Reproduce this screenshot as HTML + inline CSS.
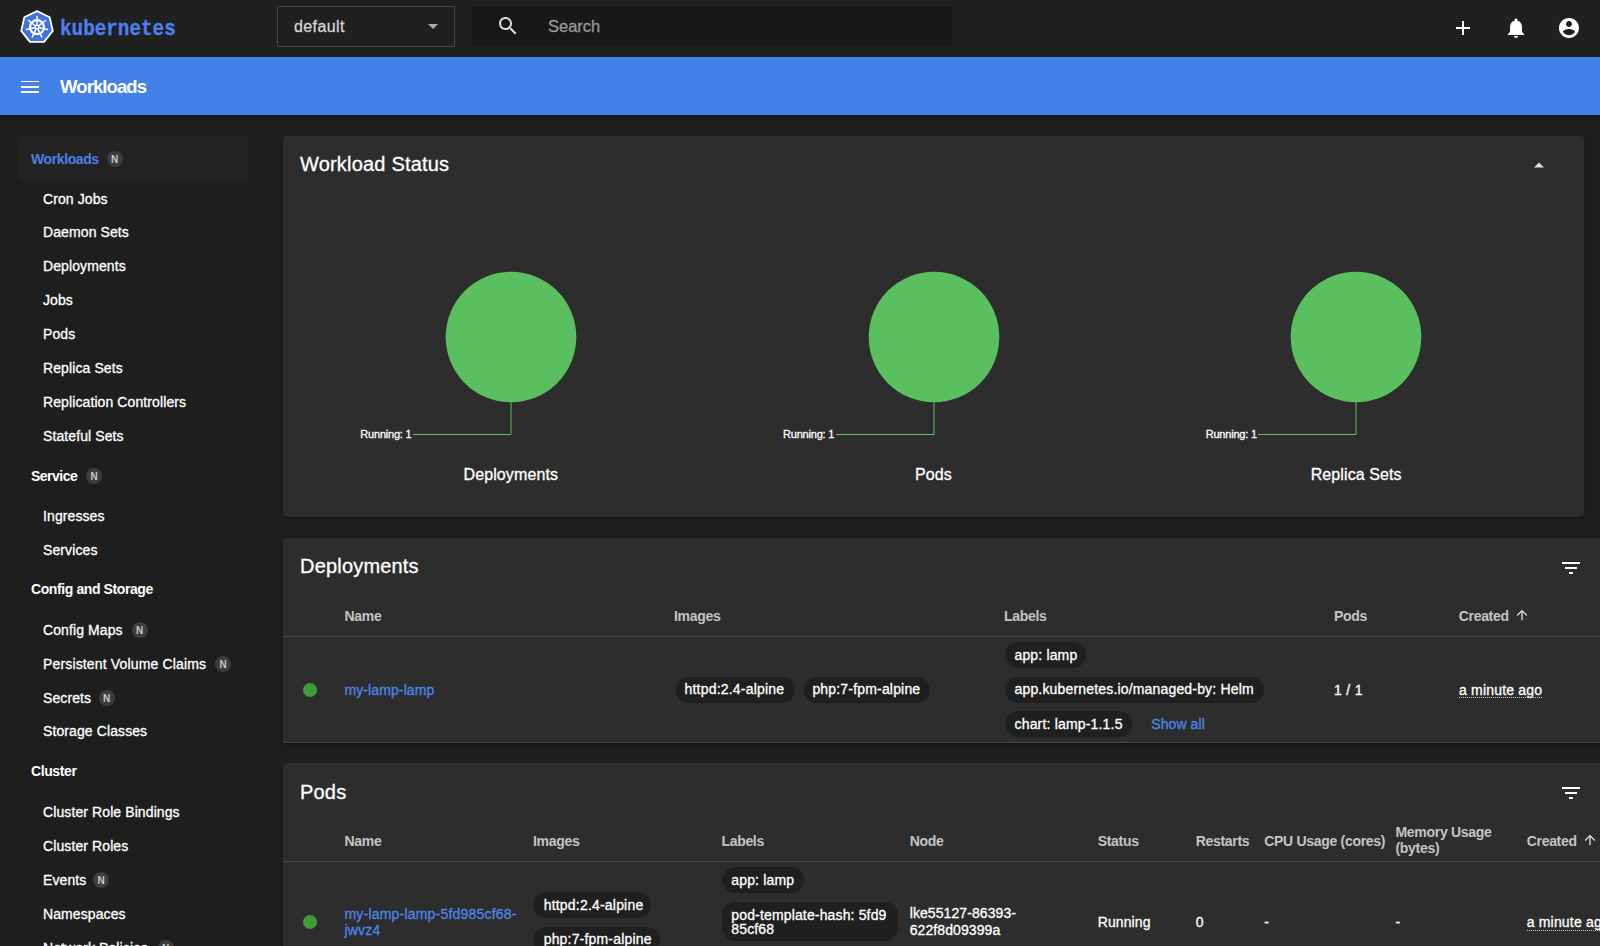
<!DOCTYPE html>
<html><head><meta charset="utf-8"><title>Workloads - Kubernetes Dashboard</title>
<style>
html,body{margin:0;padding:0;width:1600px;height:946px;overflow:hidden;background:#1e1e1e;font-family:'Liberation Sans', sans-serif;}
.t{position:absolute;white-space:nowrap;line-height:1;-webkit-text-stroke:0.3px currentColor;}
.b{-webkit-text-stroke:0;}
svg{display:block}
</style></head><body>
<div style="position:absolute;left:0;top:0;width:1600px;height:57px;background:#202020"></div>
<svg style="position:absolute;left:20px;top:10px;" width="34" height="34" viewBox="0 0 34 34"><polygon points="17.00,1.10 29.67,7.20 32.79,20.90 24.03,31.90 9.97,31.90 1.21,20.90 4.33,7.20" fill="#4470e6" stroke="#fff" stroke-width="1.8" stroke-linejoin="round"/><circle cx="17" cy="17.2" r="7" fill="none" stroke="#fff" stroke-width="2.2"/><line x1="17" y1="17.2" x2="17.00" y2="6.40" stroke="#fff" stroke-width="1.5" stroke-linecap="round"/><line x1="17" y1="17.2" x2="25.44" y2="10.47" stroke="#fff" stroke-width="1.5" stroke-linecap="round"/><line x1="17" y1="17.2" x2="27.53" y2="19.60" stroke="#fff" stroke-width="1.5" stroke-linecap="round"/><line x1="17" y1="17.2" x2="21.69" y2="26.93" stroke="#fff" stroke-width="1.5" stroke-linecap="round"/><line x1="17" y1="17.2" x2="12.31" y2="26.93" stroke="#fff" stroke-width="1.5" stroke-linecap="round"/><line x1="17" y1="17.2" x2="6.47" y2="19.60" stroke="#fff" stroke-width="1.5" stroke-linecap="round"/><line x1="17" y1="17.2" x2="8.56" y2="10.47" stroke="#fff" stroke-width="1.5" stroke-linecap="round"/><circle cx="17" cy="17.2" r="2.4" fill="#fff"/><circle cx="17" cy="17.2" r="1.1" fill="#4a6ad8"/></svg>
<div class="t" style="left:60px;top:19px;font-family:'Liberation Mono',monospace;font-size:19.3px;font-weight:bold;color:#4e7ff0;transform:scaleY(1.12);transform-origin:0 0;line-height:1">kubernetes</div>
<div style="position:absolute;left:277px;top:6px;width:176px;height:39px;border:1px solid #454545;border-radius:1px"></div>
<div class="t" style="left:294px;top:19.46px;font-size:16px;font-weight:normal;color:#d6d6d6;letter-spacing:0.4px;">default</div>
<svg style="position:absolute;left:420.5px;top:14.4px;" width="24" height="24" viewBox="0 0 24 24"><path d="M7 10l5 5 5-5z" fill="#aaa"/></svg>
<div style="position:absolute;left:472px;top:7px;width:480px;height:39px;background:#181818"></div>
<svg style="position:absolute;left:496px;top:14px;" width="24" height="24" viewBox="0 0 24 24"><path d="M15.5 14h-.79l-.28-.27C15.41 12.59 16 11.11 16 9.5 16 5.91 13.09 3 9.5 3S3 5.91 3 9.5 5.91 16 9.5 16c1.61 0 3.09-.59 4.23-1.57l.27.28v.79l5 4.99L20.49 19l-4.99-5zm-6 0C7.01 14 5 11.99 5 9.5S7.01 5 9.5 5 14 7.01 14 9.5 11.99 14 9.5 14z" fill="#ddd"/></svg>
<div class="t" style="left:548px;top:18.03px;font-size:16.5px;font-weight:normal;color:#999;letter-spacing:0px;">Search</div>
<svg style="position:absolute;left:1450.5px;top:15.5px;" width="24" height="24" viewBox="0 0 24 24"><path d="M19 13h-6v6h-2v-6H5v-2h6V5h2v6h6v2z" fill="#fff"/></svg>
<svg style="position:absolute;left:1503.5px;top:15.5px;" width="24" height="24" viewBox="0 0 24 24"><path d="M12 22c1.1 0 2-.9 2-2h-4c0 1.1.89 2 2 2zm6-6v-5c0-3.07-1.64-5.64-4.5-6.32V4c0-.83-.67-1.5-1.5-1.5s-1.5.67-1.5 1.5v.68C7.63 5.36 6 7.920 6 11v5l-2 2v1h16v-1l-2-2z" fill="#fff"/></svg>
<svg style="position:absolute;left:1557.2px;top:15.5px;" width="24" height="24" viewBox="0 0 24 24"><path d="M12 2C6.48 2 2 6.48 2 12s4.48 10 10 10 10-4.48 10-10S17.52 2 12 2zm0 3c1.66 0 3 1.34 3 3s-1.34 3-3 3-3-1.34-3-3 1.34-3 3-3zm0 14.2c-2.5 0-4.71-1.28-6-3.22.03-1.99 4-3.08 6-3.08 1.99 0 5.97 1.09 6 3.08-1.29 1.94-3.5 3.22-6 3.22z" fill="#fff"/></svg>
<div style="position:absolute;left:0;top:57px;width:1600px;height:58px;background:#4380e8;box-shadow:0 2px 3px rgba(0,0,0,.35)"></div>
<svg style="position:absolute;left:18px;top:75px;" width="24" height="24" viewBox="0 0 24 24"><path d="M3 18h18v-2H3v2zm0-5h18v-2H3v2zm0-8v2h18V6H3z" fill="#fff"/></svg>
<div class="t b" style="left:60px;top:77.84px;font-size:18.5px;font-weight:bold;color:#fff;letter-spacing:-0.9px;">Workloads</div>
<div style="position:absolute;left:19px;top:137px;width:229px;height:44px;background:#232323"></div>
<div class="t b" style="left:31px;top:151.65px;font-size:14px;font-weight:bold;color:#4a80e8;letter-spacing:-0.4px;">Workloads</div>
<div style="position:absolute;left:106.5px;top:151px;width:16px;height:16px;border-radius:50%;background:#3d3d3d;color:#c8c8c8;font:bold 10px/17px 'Liberation Sans', sans-serif;text-align:center">N</div>
<div class="t" style="left:43px;top:191.55px;font-size:14px;font-weight:normal;color:#fff;letter-spacing:0.1px;">Cron Jobs</div>
<div class="t" style="left:43px;top:225.45px;font-size:14px;font-weight:normal;color:#fff;letter-spacing:0.1px;">Daemon Sets</div>
<div class="t" style="left:43px;top:259.35px;font-size:14px;font-weight:normal;color:#fff;letter-spacing:0.1px;">Deployments</div>
<div class="t" style="left:43px;top:293.25px;font-size:14px;font-weight:normal;color:#fff;letter-spacing:0.1px;">Jobs</div>
<div class="t" style="left:43px;top:327.15px;font-size:14px;font-weight:normal;color:#fff;letter-spacing:0.1px;">Pods</div>
<div class="t" style="left:43px;top:361.05px;font-size:14px;font-weight:normal;color:#fff;letter-spacing:0.1px;">Replica Sets</div>
<div class="t" style="left:43px;top:394.95px;font-size:14px;font-weight:normal;color:#fff;letter-spacing:0.1px;">Replication Controllers</div>
<div class="t" style="left:43px;top:428.85px;font-size:14px;font-weight:normal;color:#fff;letter-spacing:0.1px;">Stateful Sets</div>
<div class="t b" style="left:31px;top:468.65px;font-size:14px;font-weight:bold;color:#fff;letter-spacing:-0.5px;">Service</div>
<div style="position:absolute;left:86px;top:468px;width:16px;height:16px;border-radius:50%;background:#3d3d3d;color:#c8c8c8;font:bold 10px/17px 'Liberation Sans', sans-serif;text-align:center">N</div>
<div class="t" style="left:43px;top:508.85px;font-size:14px;font-weight:normal;color:#fff;letter-spacing:0.1px;">Ingresses</div>
<div class="t" style="left:43px;top:542.65px;font-size:14px;font-weight:normal;color:#fff;letter-spacing:0.1px;">Services</div>
<div class="t b" style="left:31px;top:582.45px;font-size:14px;font-weight:bold;color:#fff;letter-spacing:-0.4px;">Config and Storage</div>
<div class="t" style="left:43px;top:622.85px;font-size:14px;font-weight:normal;color:#fff;letter-spacing:0.1px;">Config Maps</div>
<div style="position:absolute;left:131.7px;top:622px;width:16px;height:16px;border-radius:50%;background:#3d3d3d;color:#c8c8c8;font:bold 10px/17px 'Liberation Sans', sans-serif;text-align:center">N</div>
<div class="t" style="left:43px;top:656.75px;font-size:14px;font-weight:normal;color:#fff;letter-spacing:0.15px;">Persistent Volume Claims</div>
<div style="position:absolute;left:215px;top:656px;width:16px;height:16px;border-radius:50%;background:#3d3d3d;color:#c8c8c8;font:bold 10px/17px 'Liberation Sans', sans-serif;text-align:center">N</div>
<div class="t" style="left:43px;top:690.55px;font-size:14px;font-weight:normal;color:#fff;letter-spacing:0.1px;">Secrets</div>
<div style="position:absolute;left:98.5px;top:690px;width:16px;height:16px;border-radius:50%;background:#3d3d3d;color:#c8c8c8;font:bold 10px/17px 'Liberation Sans', sans-serif;text-align:center">N</div>
<div class="t" style="left:43px;top:724.45px;font-size:14px;font-weight:normal;color:#fff;letter-spacing:0.1px;">Storage Classes</div>
<div class="t b" style="left:31px;top:764.45px;font-size:14px;font-weight:bold;color:#fff;letter-spacing:-0.4px;">Cluster</div>
<div class="t" style="left:43px;top:804.55px;font-size:14px;font-weight:normal;color:#fff;letter-spacing:0.1px;">Cluster Role Bindings</div>
<div class="t" style="left:43px;top:838.55px;font-size:14px;font-weight:normal;color:#fff;letter-spacing:0.1px;">Cluster Roles</div>
<div class="t" style="left:43px;top:872.55px;font-size:14px;font-weight:normal;color:#fff;letter-spacing:0.1px;">Events</div>
<div style="position:absolute;left:93px;top:872px;width:16px;height:16px;border-radius:50%;background:#3d3d3d;color:#c8c8c8;font:bold 10px/17px 'Liberation Sans', sans-serif;text-align:center">N</div>
<div class="t" style="left:43px;top:906.65px;font-size:14px;font-weight:normal;color:#fff;letter-spacing:0.1px;">Namespaces</div>
<div class="t" style="left:43px;top:940.55px;font-size:14px;font-weight:normal;color:#fff;letter-spacing:0.1px;">Network Policies</div>
<div style="position:absolute;left:157.6px;top:940px;width:16px;height:16px;border-radius:50%;background:#3d3d3d;color:#c8c8c8;font:bold 10px/17px 'Liberation Sans', sans-serif;text-align:center">N</div>
<div style="position:absolute;left:283px;top:136px;width:1301px;height:381px;background:#2d2d2d;border-radius:4px;box-shadow:0 2px 1px -1px rgba(0,0,0,.2),0 1px 1px 0 rgba(0,0,0,.14),0 1px 3px 0 rgba(0,0,0,.12)"></div>
<div class="t" style="left:300px;top:153.67px;font-size:20px;font-weight:normal;color:#fff;letter-spacing:0.19px;">Workload Status</div>
<svg style="position:absolute;left:1526.5px;top:152.5px;" width="24" height="24" viewBox="0 0 24 24"><path d="M7 14.5l5-5 5 5z" fill="#ddd"/></svg>
<svg style="position:absolute;left:440.8px;top:267px;overflow:visible" width="140" height="175" viewBox="0 0 140 175"><circle cx="70" cy="70" r="65.3" fill="#5abf5e"/><polyline points="70,135 70,167.5 -28,167.5" fill="none" stroke="#5abf5e" stroke-width="1"/></svg>
<div class="t" style="left:360.3px;top:429.49px;font-size:11px;font-weight:normal;color:#fff;letter-spacing:-0.2px;">Running: 1</div>
<div class="t" style="left:410.8px;width:200px;text-align:center;top:467.46px;font-size:16px;color:#fff;letter-spacing:0.1px">Deployments</div>
<svg style="position:absolute;left:863.5px;top:267px;overflow:visible" width="140" height="175" viewBox="0 0 140 175"><circle cx="70" cy="70" r="65.3" fill="#5abf5e"/><polyline points="70,135 70,167.5 -28,167.5" fill="none" stroke="#5abf5e" stroke-width="1"/></svg>
<div class="t" style="left:783.0px;top:429.49px;font-size:11px;font-weight:normal;color:#fff;letter-spacing:-0.2px;">Running: 1</div>
<div class="t" style="left:833.5px;width:200px;text-align:center;top:467.46px;font-size:16px;color:#fff;letter-spacing:0.1px">Pods</div>
<svg style="position:absolute;left:1286.2px;top:267px;overflow:visible" width="140" height="175" viewBox="0 0 140 175"><circle cx="70" cy="70" r="65.3" fill="#5abf5e"/><polyline points="70,135 70,167.5 -28,167.5" fill="none" stroke="#5abf5e" stroke-width="1"/></svg>
<div class="t" style="left:1205.7px;top:429.49px;font-size:11px;font-weight:normal;color:#fff;letter-spacing:-0.2px;">Running: 1</div>
<div class="t" style="left:1256.2px;width:200px;text-align:center;top:467.46px;font-size:16px;color:#fff;letter-spacing:0.1px">Replica Sets</div>
<div style="position:absolute;left:283px;top:538px;width:1330px;height:205px;background:#2d2d2d;border-radius:4px;box-shadow:0 2px 1px -1px rgba(0,0,0,.2),0 1px 1px 0 rgba(0,0,0,.14),0 1px 3px 0 rgba(0,0,0,.12);border-radius:4px 4px 0 0"></div>
<div style="position:absolute;left:283px;top:742px;width:1317px;height:1px;background:#464646"></div>
<div class="t" style="left:300px;top:556.47px;font-size:20px;font-weight:normal;color:#fff;letter-spacing:0.19px;">Deployments</div>
<svg style="position:absolute;left:1559px;top:555.5px;" width="24" height="24" viewBox="0 0 24 24"><path d="M10 18h4v-2h-4v2zM3 6v2h18V6H3zm3 7h12v-2H6v2z" fill="#fff"/></svg>
<div class="t b" style="left:344.5px;top:608.75px;font-size:14px;font-weight:bold;color:#c4c4c4;letter-spacing:-0.3px;">Name</div>
<div class="t b" style="left:674px;top:608.75px;font-size:14px;font-weight:bold;color:#c4c4c4;letter-spacing:-0.3px;">Images</div>
<div class="t b" style="left:1004px;top:608.75px;font-size:14px;font-weight:bold;color:#c4c4c4;letter-spacing:-0.3px;">Labels</div>
<div class="t b" style="left:1334px;top:608.75px;font-size:14px;font-weight:bold;color:#c4c4c4;letter-spacing:-0.3px;">Pods</div>
<div class="t b" style="left:1458.7px;top:608.75px;font-size:14px;font-weight:bold;color:#c4c4c4;letter-spacing:-0.3px;">Created</div>
<svg style="position:absolute;left:1513.8px;top:607.3px;" width="16" height="16" viewBox="0 0 24 24"><path d="M4 12l1.41 1.41L11 7.83V20h2V7.83l5.58 5.59L20 12l-8-8-8 8z" fill="#ddd"/></svg>
<div style="position:absolute;left:283px;top:636px;width:1317px;height:1px;background:#484848"></div>
<div style="position:absolute;left:303px;top:683px;width:14px;height:14px;border-radius:50%;background:#3f9b35"></div>
<div class="t" style="left:344.5px;top:682.85px;font-size:14px;font-weight:normal;color:#4f86e8;letter-spacing:0.1px;">my-lamp-lamp</div>
<div style="position:absolute;left:675.5px;top:676.5px;width:119px;height:26px;border-radius:13px;background:#1f1f1f"></div>
<div class="t" style="left:684.5px;top:682.35px;font-size:14px;font-weight:normal;color:#fff;letter-spacing:0.2px;">httpd:2.4-alpine</div>
<div style="position:absolute;left:803.5px;top:676.5px;width:126px;height:26px;border-radius:13px;background:#1f1f1f"></div>
<div class="t" style="left:812.4px;top:682.35px;font-size:14px;font-weight:normal;color:#fff;letter-spacing:0.18px;">php:7-fpm-alpine</div>
<div style="position:absolute;left:1005px;top:642px;width:81px;height:26px;border-radius:13px;background:#1f1f1f"></div>
<div class="t" style="left:1014.5px;top:647.75px;font-size:14px;font-weight:normal;color:#fff;letter-spacing:0.15px;">app: lamp</div>
<div style="position:absolute;left:1005px;top:676.5px;width:259px;height:26px;border-radius:13px;background:#1f1f1f"></div>
<div class="t" style="left:1014.5px;top:682.35px;font-size:14px;font-weight:normal;color:#fff;letter-spacing:0.17px;">app.kubernetes.io/managed-by: Helm</div>
<div style="position:absolute;left:1005px;top:711px;width:127px;height:26px;border-radius:13px;background:#1f1f1f"></div>
<div class="t" style="left:1014.5px;top:716.85px;font-size:14px;font-weight:normal;color:#fff;letter-spacing:0.18px;">chart: lamp-1.1.5</div>
<div class="t" style="left:1151.3px;top:716.65px;font-size:14px;font-weight:normal;color:#4f86e8;letter-spacing:0.08px;">Show all</div>
<div class="t" style="left:1334px;top:682.65px;font-size:14px;font-weight:normal;color:#fff;letter-spacing:0.3px;">1 / 1</div>
<div class="t" style="left:1459px;top:682.65px;font-size:14px;font-weight:normal;color:#fff;letter-spacing:0.19px;">a minute ago</div>
<div style="position:absolute;left:1459px;top:697px;width:83px;height:0;border-top:1px dotted #ccc"></div>
<div style="position:absolute;left:283px;top:763px;width:1330px;height:300px;background:#2d2d2d;border-radius:4px;box-shadow:0 2px 1px -1px rgba(0,0,0,.2),0 1px 1px 0 rgba(0,0,0,.14),0 1px 3px 0 rgba(0,0,0,.12)"></div>
<div class="t" style="left:300px;top:781.87px;font-size:20px;font-weight:normal;color:#fff;letter-spacing:0.19px;">Pods</div>
<svg style="position:absolute;left:1559px;top:780.5px;" width="24" height="24" viewBox="0 0 24 24"><path d="M10 18h4v-2h-4v2zM3 6v2h18V6H3zm3 7h12v-2H6v2z" fill="#fff"/></svg>
<div class="t b" style="left:344.5px;top:833.95px;font-size:14px;font-weight:bold;color:#c4c4c4;letter-spacing:-0.3px;">Name</div>
<div class="t b" style="left:533px;top:833.95px;font-size:14px;font-weight:bold;color:#c4c4c4;letter-spacing:-0.3px;">Images</div>
<div class="t b" style="left:721.4px;top:833.95px;font-size:14px;font-weight:bold;color:#c4c4c4;letter-spacing:-0.3px;">Labels</div>
<div class="t b" style="left:909.7px;top:833.95px;font-size:14px;font-weight:bold;color:#c4c4c4;letter-spacing:-0.3px;">Node</div>
<div class="t b" style="left:1097.7px;top:833.95px;font-size:14px;font-weight:bold;color:#c4c4c4;letter-spacing:-0.3px;">Status</div>
<div class="t b" style="left:1195.7px;top:833.95px;font-size:14px;font-weight:bold;color:#c4c4c4;letter-spacing:-0.3px;">Restarts</div>
<div class="t b" style="left:1264.2px;top:833.95px;font-size:14px;font-weight:bold;color:#c4c4c4;letter-spacing:-0.3px;">CPU Usage (cores)</div>
<div class="t b" style="left:1526.7px;top:833.95px;font-size:14px;font-weight:bold;color:#c4c4c4;letter-spacing:-0.3px;">Created</div>
<div class="t b" style="left:1395.5px;top:825.05px;font-size:14px;font-weight:bold;color:#c4c4c4;letter-spacing:-0.3px;">Memory Usage</div>
<div class="t b" style="left:1395.5px;top:841.45px;font-size:14px;font-weight:bold;color:#c4c4c4;letter-spacing:-0.3px;">(bytes)</div>
<svg style="position:absolute;left:1581.5px;top:832.3px;" width="16" height="16" viewBox="0 0 24 24"><path d="M4 12l1.41 1.41L11 7.83V20h2V7.83l5.58 5.59L20 12l-8-8-8 8z" fill="#ddd"/></svg>
<div style="position:absolute;left:283px;top:861px;width:1317px;height:1px;background:#484848"></div>
<div style="position:absolute;left:303px;top:915px;width:14px;height:14px;border-radius:50%;background:#3f9b35"></div>
<div class="t" style="left:344.5px;top:906.65px;font-size:14px;font-weight:normal;color:#4f86e8;letter-spacing:0.2px;">my-lamp-lamp-5fd985cf68-</div>
<div class="t" style="left:344.5px;top:923.05px;font-size:14px;font-weight:normal;color:#4f86e8;letter-spacing:0.2px;">jwvz4</div>
<div style="position:absolute;left:533px;top:892px;width:118px;height:26px;border-radius:13px;background:#1f1f1f"></div>
<div class="t" style="left:543.7px;top:897.65px;font-size:14px;font-weight:normal;color:#fff;letter-spacing:0.2px;">httpd:2.4-alpine</div>
<div style="position:absolute;left:533px;top:926.5px;width:127px;height:26px;border-radius:13px;background:#1f1f1f"></div>
<div class="t" style="left:543.7px;top:932.15px;font-size:14px;font-weight:normal;color:#fff;letter-spacing:0.18px;">php:7-fpm-alpine</div>
<div style="position:absolute;left:722px;top:867px;width:82px;height:26px;border-radius:13px;background:#1f1f1f"></div>
<div class="t" style="left:731.3px;top:872.65px;font-size:14px;font-weight:normal;color:#fff;letter-spacing:0.15px;">app: lamp</div>
<div style="position:absolute;left:722px;top:901.5px;width:176px;height:39.5px;border-radius:13px;background:#1f1f1f"></div>
<div class="t" style="left:731.3px;top:907.65px;font-size:14px;font-weight:normal;color:#fff;letter-spacing:0.15px;">pod-template-hash: 5fd9</div>
<div class="t" style="left:731.3px;top:921.95px;font-size:14px;font-weight:normal;color:#fff;letter-spacing:0.15px;">85cf68</div>
<div class="t" style="left:909.7px;top:906.15px;font-size:14px;font-weight:normal;color:#fff;letter-spacing:0.09px;">lke55127-86393-</div>
<div class="t" style="left:909.7px;top:922.95px;font-size:14px;font-weight:normal;color:#fff;letter-spacing:0.09px;">622f8d09399a</div>
<div class="t" style="left:1097.7px;top:915.35px;font-size:14px;font-weight:normal;color:#fff;letter-spacing:0.1px;">Running</div>
<div class="t" style="left:1195.7px;top:915.35px;font-size:14px;font-weight:normal;color:#fff;letter-spacing:0px;">0</div>
<div class="t" style="left:1264.2px;top:915.35px;font-size:14px;font-weight:normal;color:#fff;letter-spacing:0px;">-</div>
<div class="t" style="left:1395.5px;top:915.35px;font-size:14px;font-weight:normal;color:#fff;letter-spacing:0px;">-</div>
<div class="t" style="left:1526.7px;top:915.35px;font-size:14px;font-weight:normal;color:#fff;letter-spacing:0.19px;">a minute ago</div>
<div style="position:absolute;left:1527px;top:930px;width:83px;height:0;border-top:1px dotted #ccc"></div>
</body></html>
